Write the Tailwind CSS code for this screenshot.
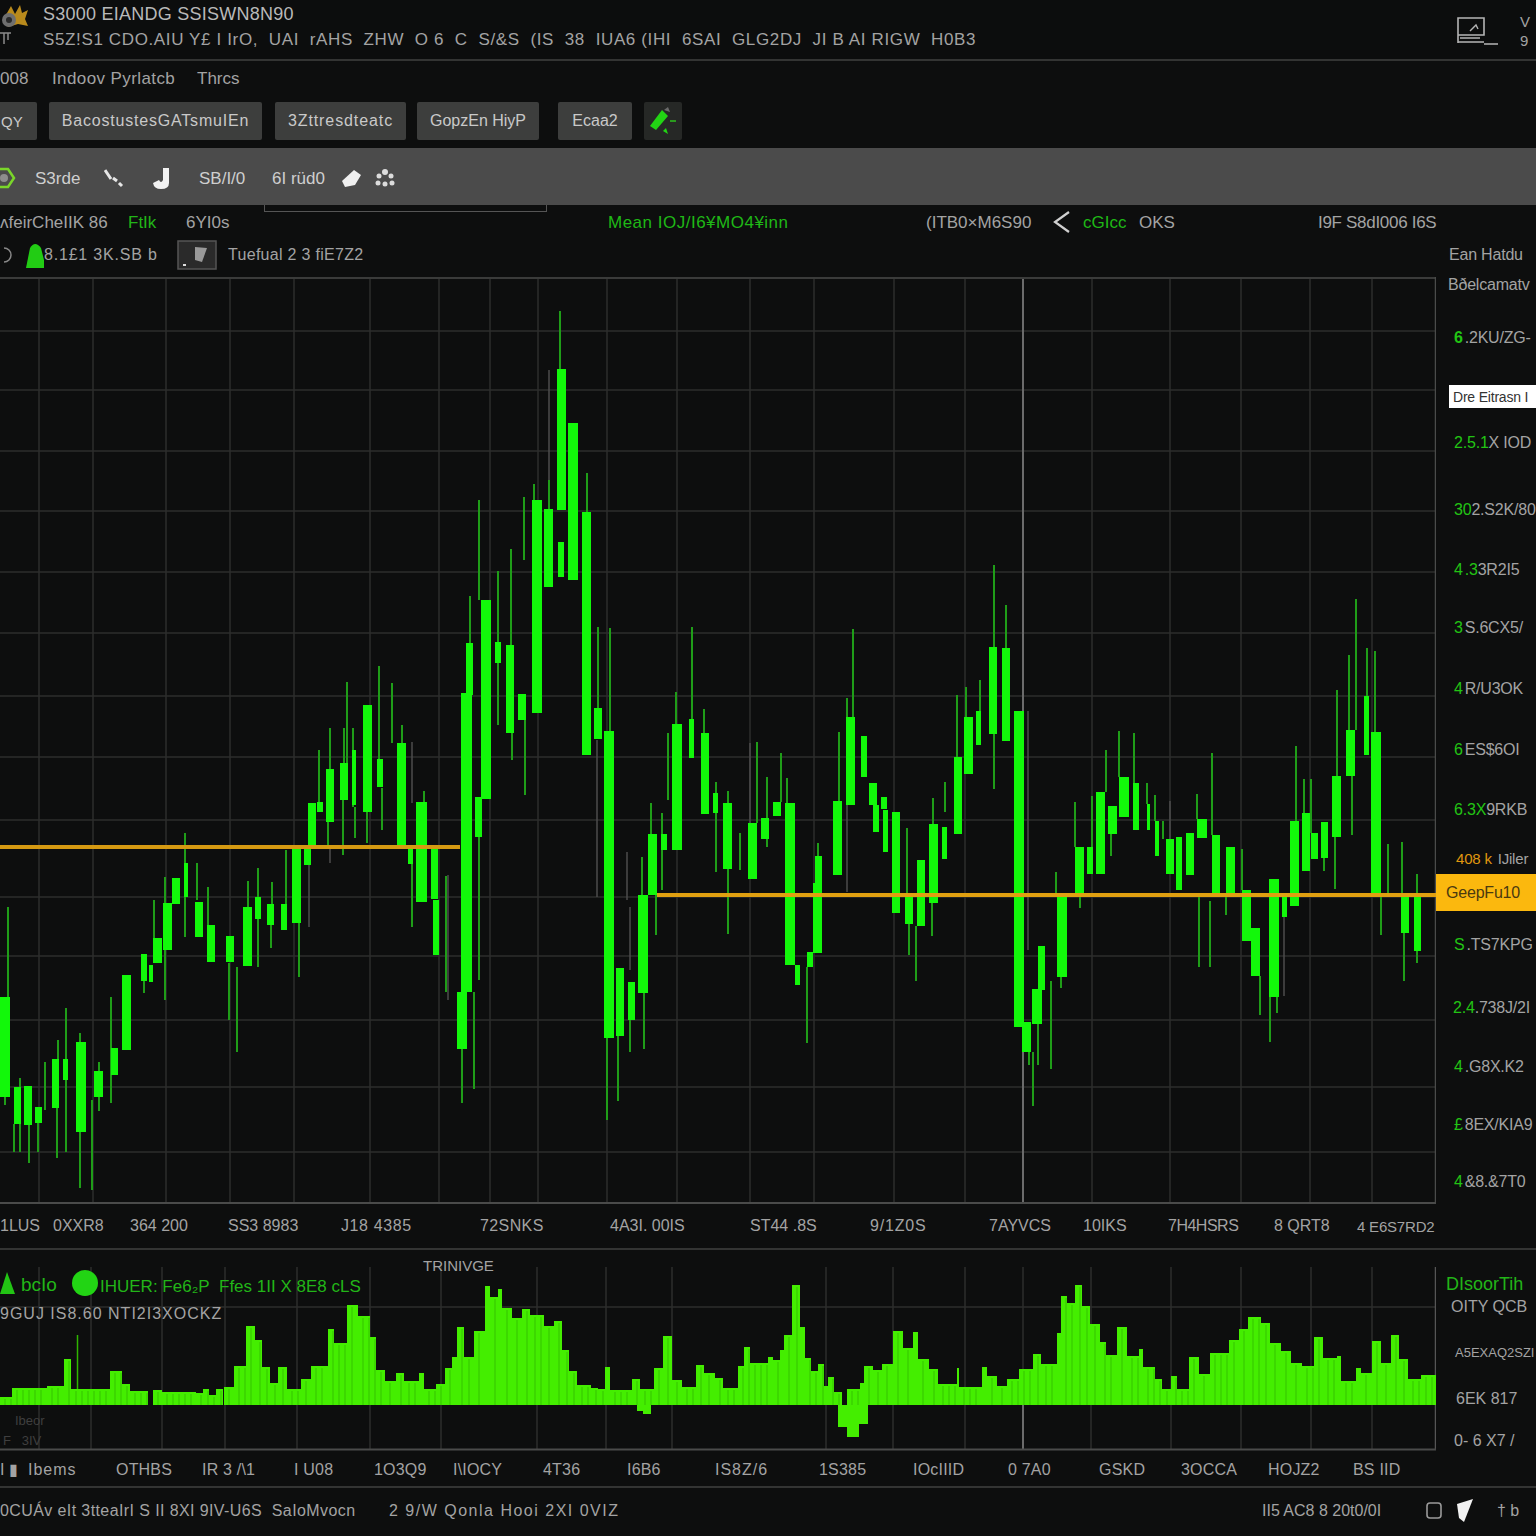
<!DOCTYPE html>
<html lang="en">
<head>
  <meta charset="UTF-8" />
  <title>Trading terminal</title>
  <script src="https://cdn.jsdelivr.net/npm/@tailwindcss/browser@4"></script>
</head>
<body class="bg-[#0d0e0e] text-[#a3a3a3] [font-family:'Liberation_Sans',sans-serif] text-[16px] leading-none overflow-hidden">
<div class="w-[1536px] h-[1536px] overflow-hidden">

  <!-- Header -->
  <header class="h-[61px] bg-[#0c0d0d] border-b-2 border-[#333433] flex">
    <svg class="w-[43px] h-[59px] shrink-0" viewBox="0 0 43 59">
      <path d="M3 20 L11 6 L15 14 L20 5 L22 13 L28 10 L25 19 L28 26 L18 24 L8 27 Z" fill="#b98a1c"/>
      <circle cx="9" cy="20" r="7" fill="#6f6f6f"/>
      <circle cx="9" cy="20" r="3" fill="#2a2a2a"/>
      <path d="M0 33 H11 M4 33 V44 M8 33 V40" stroke="#8a8a8a" stroke-width="1.5" fill="none"/>
    </svg>
    <div class="flex flex-col pt-[5px] gap-[8px] whitespace-nowrap">
      <div class="text-[18px] text-[#b9b9b9] tracking-[0.25px]">S3000 EIANDG SSISWN8N90</div>
      <div class="text-[17px] tracking-[0.63px]">S5Z!S1 CDO.AIU Y£ I IrO,&nbsp; UAI&nbsp; rAHS&nbsp; ZHW&nbsp; O 6&nbsp; C&nbsp; S/&amp;S&nbsp; (IS&nbsp; 38&nbsp; IUA6 (IHI&nbsp; 6SAI&nbsp; GLG2DJ&nbsp; JI B AI RIGW&nbsp; H0B3</div>
    </div>
    <div class="ml-auto flex">
      <svg class="w-[44px] h-[59px]" viewBox="0 0 44 59">
        <path d="M2 18 H28 V35 H2 Z M2 42 H28 M28 44 H42 M2 35 V43" stroke="#b5b5b5" stroke-width="1.6" fill="none"/>
        <path d="M14 31 L20 25 L22 29 M4 38 H24" stroke="#b5b5b5" stroke-width="1.4" fill="none"/>
      </svg>
      <div class="w-[36px] pl-[20px] pt-[14px] flex flex-col gap-[4px] text-[15px]"><span>V</span><span>9</span></div>
    </div>
  </header>

  <!-- Menu -->
  <nav class="h-[39px] flex items-center pb-[4px] text-[17px] whitespace-nowrap">
    <span class="w-[52px]">008</span>
    <span class="w-[145px] tracking-[0.4px]">Indoov Pyrlatcb</span>
    <span>Thrcs</span>
  </nav>

  <!-- Tool buttons -->
  <div class="h-[48px] flex items-start pt-[2px] text-[16px] text-[#c9c9c9] whitespace-nowrap">
    <div class="w-[37px] h-[38px] bg-[#3d3e3d] rounded-r-[2px] flex items-center pl-[1px] text-[15px]">QY</div>
    <div class="ml-[12px] w-[213px] h-[38px] bg-[#3d3e3d] rounded-[2px] flex items-center justify-center tracking-[0.8px]">BacostustesGATsmuIEn</div>
    <div class="ml-[13px] w-[131px] h-[38px] bg-[#3d3e3d] rounded-[2px] flex items-center justify-center tracking-[0.9px]">3Zttresdteatc</div>
    <div class="ml-[11px] w-[122px] h-[38px] bg-[#3d3e3d] rounded-[2px] flex items-center justify-center">GopzEn HiyP</div>
    <div class="ml-[19px] w-[74px] h-[38px] bg-[#3d3e3d] rounded-[2px] flex items-center justify-center">Ecaa2</div>
    <div class="ml-[12px] w-[38px] h-[38px] bg-[#262826] rounded-[2px]">
      <svg class="w-[38px] h-[38px]" viewBox="0 0 38 38">
        <path d="M6 24 L18 8 L24 14 L12 28 Z" fill="#22d414"/>
        <path d="M20 8 L24 5 L26 10 Z" fill="#6b6b6b"/>
        <path d="M19 29 L22 26 L24 32 Z" fill="#22d414"/>
        <path d="M26 19 H32" stroke="#2a9a1e" stroke-width="2"/>
      </svg>
    </div>
  </div>

  <!-- Gray toolbar -->
  <div class="h-[57px] bg-[#4b4b4b] flex items-center pt-[4px] text-[17px] text-[#cfcfcf] whitespace-nowrap">
    <svg class="w-[35px] h-[40px] shrink-0" viewBox="0 0 35 40">
      <path d="M0 10 L8 10 L14 19 L8 28 L0 28" fill="none" stroke="#7ad62a" stroke-width="2.5"/>
      <circle cx="4" cy="19" r="4" fill="#8d8d8d"/>
    </svg>
    <span class="w-[69px]">S3rde</span>
    <svg class="w-[49px] h-[30px] shrink-0" viewBox="0 0 49 30">
      <path d="M1 6 L7 15 M9 14 L13 17 M15 19 L18 22" stroke="#e6e6e6" stroke-width="3"/>
    </svg>
    <svg class="w-[46px] h-[30px] shrink-0" viewBox="0 0 46 30">
      <path d="M16 4 V19 Q16 25 8 25 Q1 25 0 19 L6 16 Q8 20 10 16 V4 Z" fill="#f2f2f2"/>
    </svg>
    <span class="w-[73px]">SB/I/0</span>
    <span class="w-[70px]">6I rüd0</span>
    <svg class="w-[32px] h-[30px] shrink-0" viewBox="0 0 32 30">
      <path d="M0 17 L12 6 L19 11 L13 21 L3 23 Z" fill="#f0f0f0"/>
    </svg>
    <svg class="w-[24px] h-[30px] shrink-0" viewBox="0 0 24 30">
      <g fill="#dcdcdc"><circle cx="11" cy="8" r="3"/><circle cx="5" cy="12" r="2.5"/><circle cx="17" cy="12" r="2.5"/><circle cx="4" cy="19" r="2.5"/><circle cx="11" cy="20" r="2.5"/><circle cx="18" cy="19" r="2.5"/></g>
    </svg>
  </div>

  <!-- Main chart and price axis -->
  <section class="h-[1045px] flex border-b-2 border-[#333433]">
    <div class="w-[1436px] shrink-0 flex flex-col relative">
      <div class="absolute left-[264px] top-0 w-[283px] h-[7px] border-x border-b border-[#555]"></div>
      <div class="h-[35px] shrink-0 flex items-center text-[17px] whitespace-nowrap [&>*]:shrink-0">
        <span class="w-[128px]">ʌfeirCheIIK 86</span>
        <span class="w-[58px] text-[#22b518]">FtIk</span>
        <span class="w-[422px]">6YI0s</span>
        <span class="w-[318px] text-[#1fb816] tracking-[0.5px]">Mean IOJ/I6¥MO4¥inn</span>
        <span class="w-[126px]">(ITB0×M6S90</span>
        <svg class="w-[31px] h-[30px]" viewBox="0 0 31 30"><path d="M17 4 L3 14 L17 24" fill="none" stroke="#d0d0d0" stroke-width="2.2"/></svg>
        <span class="w-[56px] text-[#1fb816]">cGIcc</span>
        <span class="w-[179px]">OKS</span>
        <span class="tracking-[-0.3px]">I9F S8dI006 I6S</span>
      </div>
      <div class="h-[37px] shrink-0 flex items-center pb-[8px] text-[16px] whitespace-nowrap [&>*]:shrink-0">
        <svg class="w-[44px] h-[30px]" viewBox="0 0 44 30">
          <path d="M0 8 A7 7 0 0 1 0 22" transform="translate(4 0)" fill="none" stroke="#888" stroke-width="1.5"/>
          <path d="M26 28 L30 8 Q35 0 41 8 L46 28 Z" fill="#22cc14"/>
        </svg>
        <span class="w-[133px] tracking-[0.8px]">8.1£1 3K.SB b</span>
        <svg class="w-[40px] h-[30px]" viewBox="0 0 40 30">
          <rect x="1" y="1" width="38" height="28" fill="#2a2a2a" stroke="#555" stroke-width="1.5"/>
          <path d="M18 7 V20 L25 22 L30 8" fill="#999"/>
          <path d="M6 25 H9" stroke="#ddd" stroke-width="2"/>
        </svg>
        <span class="ml-[11px] tracking-[0.3px]">Tuefual 2 3 fiE7Z2</span>
      </div>
      <svg id="main" class="w-[1436px] h-[927px] block shrink-0" viewBox="0 277 1436 927"></svg>
      <div class="h-[44px] shrink-0 flex items-center text-[16px] whitespace-nowrap [&>*]:shrink-0">
        <span class="w-[53px]">1LUS</span><span class="w-[77px]">0XXR8</span><span class="w-[98px]">364 200</span><span class="w-[113px]">SS3 8983</span><span class="w-[139px] tracking-[0.6px]">J18 4385</span><span class="w-[130px] tracking-[0.4px]">72SNKS</span><span class="w-[140px]">4A3I. 00IS</span><span class="w-[120px]">ST44 .8S</span><span class="w-[119px] tracking-[0.8px]">9/1Z0S</span><span class="w-[94px]">7AYVCS</span><span class="w-[85px]">10IKS</span><span class="w-[106px] tracking-[-0.5px]">7H4HSRS</span><span class="w-[83px]">8 QRT8</span><span class="text-[15px] tracking-[-0.2px]">4 E6S7RD2</span>
      </div>
    </div>
    <div class="flex-1 min-w-0 flex flex-col pt-[35px] text-[16px] tracking-[-0.2px] whitespace-nowrap overflow-hidden">
      <div class="h-[30px] shrink-0 flex items-center pl-[13px]">Ean Hatdu</div>
      <div class="h-[30px] shrink-0 flex items-center pl-[12px]">Bðelcamatv</div>
      <div class="h-[76px] shrink-0 flex items-center pl-[18px]"><b class="text-[#22c414] mr-[2px]">6</b>.2KU/ZG-</div>
      <div class="ml-[13px] mt-[9px] h-[23px] shrink-0 bg-white text-[#333] text-[14px] flex items-center pl-[4px]">Dre Eitrasn I</div>
      <div class="h-[70px] shrink-0 flex items-center pl-[18px]"><span class="text-[#22c414]">2.5.1</span>X IOD</div>
      <div class="h-[64px] shrink-0 flex items-center pl-[18px]"><span class="text-[#22c414]">30</span>2.S2K/80</div>
      <div class="h-[56px] shrink-0 flex items-center pl-[18px]"><span class="text-[#22c414] mr-[2px]">4</span><span class="text-[#22c414]">.3</span>3R2I5</div>
      <div class="h-[60px] shrink-0 flex items-center pl-[18px]"><span class="text-[#22c414] mr-[2px]">3</span>S.6CX5/</div>
      <div class="h-[62px] shrink-0 flex items-center pl-[18px]"><span class="text-[#22c414] mr-[2px]">4</span>R/U3OK</div>
      <div class="h-[60px] shrink-0 flex items-center pl-[18px]"><span class="text-[#22c414] mr-[2px]">6</span>ES$6OI</div>
      <div class="h-[60px] shrink-0 flex items-center pl-[18px]"><span class="text-[#22c414]">6.3X</span>9RKB</div>
      <div class="h-[34px] shrink-0 flex items-center pl-[20px] pt-[2px] text-[15px]"><span class="text-[#e0980e] mr-[6px]">408 k</span>IJiler</div>
      <div class="h-[37px] shrink-0 bg-[#fbb80e] text-[#4a3a10] flex items-center pl-[10px]">GeepFu10</div>
      <div class="h-[68px] shrink-0 flex items-center pl-[18px]"><span class="text-[#22c414] mr-[2px]">S</span>.TS7KPG</div>
      <div class="h-[58px] shrink-0 flex items-center pl-[17px]"><span class="text-[#22c414]">2.4</span>.738J/2I</div>
      <div class="h-[60px] shrink-0 flex items-center pl-[18px]"><span class="text-[#22c414] mr-[2px]">4</span>.G8X.K2</div>
      <div class="h-[56px] shrink-0 flex items-center pl-[18px]"><span class="text-[#22c414] mr-[2px]">£</span>8EX/KIA9</div>
      <div class="h-[58px] shrink-0 flex items-center pl-[18px]"><span class="text-[#22c414] mr-[2px]">4</span>&amp;8.&amp;7T0</div>
    </div>
  </section>

  <!-- Volume panel -->
  <section class="h-[201px] flex">
    <div class="w-[1436px] shrink-0 relative">
      <svg id="vol" class="w-[1436px] h-[201px] block" viewBox="0 1250 1436 201"></svg>
      <div class="absolute left-0 top-[20px] flex items-center text-[#22b518] text-[17px] whitespace-nowrap [&>*]:shrink-0">
        <svg class="w-[21px] h-[26px]" viewBox="0 0 21 26"><path d="M0 24 L7 2 L15 24 Z" fill="#22c414"/></svg>
        <span class="w-[51px] pt-[3px] text-[19px]">bcIo</span>
        <span class="w-[26px] h-[26px] rounded-full bg-[#22d414]"></span>
        <span class="ml-[2px] pt-[6px]">IHUER: Fe6₂P&nbsp; Ffes 1II X 8E8 cLS</span>
      </div>
      <div class="absolute left-0 top-[56px] text-[16px] tracking-[1px] whitespace-nowrap">9GUJ IS8.60 NTI2I3XOCKZ</div>
      <div class="absolute left-[423px] top-[8px] text-[15px] whitespace-nowrap">TRINIVGE</div>
      <div class="absolute left-[15px] top-[164px] text-[13px] text-[#3f3f3f]">Ibeor</div>
      <div class="absolute left-[3px] top-[184px] text-[13px] text-[#3f3f3f] whitespace-pre">F   3IV</div>
    </div>
    <div class="flex-1 min-w-0 flex flex-col whitespace-nowrap overflow-hidden text-[16px]">
      <div class="h-[43px] shrink-0 flex items-end pl-[10px] text-[#22b518] text-[18px]">DIsoorTih</div>
      <div class="h-[22px] shrink-0 flex items-end pl-[15px]">OITY QCB</div>
      <div class="h-[74px] shrink-0 flex items-center pl-[19px] text-[13px]">A5EXAQ2SZI</div>
      <div class="h-[20px] shrink-0 flex items-center pl-[20px]">6EK 817</div>
      <div class="h-[42px] shrink-0 flex items-end pb-[2px] pl-[18px]">0- 6 X7 /</div>
    </div>
  </section>

  <!-- Volume time axis -->
  <div class="h-[37px] border-b-2 border-[#333433] flex items-center pt-[2px] text-[16px] tracking-[0.2px] whitespace-nowrap [&>*]:shrink-0">
    <span class="w-[28px] whitespace-pre">I ▮</span><span class="w-[88px] tracking-[1px]">Ibems</span><span class="w-[86px]">OTHBS</span><span class="w-[92px]">IR 3 /\1</span><span class="w-[80px]">I U08</span><span class="w-[79px]">1O3Q9</span><span class="w-[90px]">I\IOCY</span><span class="w-[84px]">4T36</span><span class="w-[88px]">I6B6</span><span class="w-[104px] tracking-[1px]">IS8Z/6</span><span class="w-[94px]">1S385</span><span class="w-[95px]">IOcIIID</span><span class="w-[91px]">0 7A0</span><span class="w-[82px]">GSKD</span><span class="w-[87px]">3OCCA</span><span class="w-[85px]">HOJZ2</span><span>BS IID</span>
  </div>

  <!-- Footer -->
  <footer class="h-[48px] flex items-center text-[16px] whitespace-nowrap pb-[3px] [&>*]:shrink-0">
    <span class="w-[389px] tracking-[0.4px]">0CUÁv eIt 3tteaIrI S II 8XI 9IV-U6S&nbsp; SaIoMvocn</span>
    <span class="w-[873px] tracking-[1.5px]">2 9/W Qonla Hooi 2XI 0VIZ</span>
    <span class="w-[164px]">II5 AC8 8 20t0/0I</span>
    <svg class="w-[30px] h-[24px]" viewBox="0 0 30 24"><rect x="1" y="4" width="14" height="15" rx="3" fill="none" stroke="#9a9a9a" stroke-width="1.6"/></svg>
    <svg class="w-[41px] h-[24px]" viewBox="0 0 41 24"><path d="M1 5 L17 0 L8 23 L3 19 Z" fill="#f2f2f2"/></svg>
    <span class="whitespace-pre">† b</span>
  </footer>
</div>

<script>
  // [left, right, top, bottom]
  var bodies = [
    [0,10,997,1097],[14,21,1087,1124],[24,32,1086,1125],[35,42,1107,1123],[52,59,1059,1108],[63,68,1059,1080],
    [76,86,1042,1132],[94,103,1071,1097],[111,118,1048,1075],[122,131,975,1050],[141,147,954,981],[149,153,965,982],
    [153,162,938,963],[163,172,903,950],[172,180,878,904],[184,188,863,897],[195,203,902,937],[207,215,925,962],
    [226,234,936,962],[243,252,907,966],[255,261,897,919],[267,274,904,925],[281,287,904,930],[292,301,849,923],
    [304,311,847,865],[308,316,803,847],[317,323,802,812],[326,334,769,822],[340,348,763,800],[352,356,750,805],
    [363,372,705,812],[377,383,759,787],[397,406,743,845],[408,413,848,864],[416,427,802,902],[431,438,848,899],
    [433,439,900,955],[461,472,693,992],[457,467,992,1049],[466,473,643,695],[475,482,797,837],[481,491,600,799],
    [495,501,642,663],[506,514,645,733],[518,526,694,720],[532,542,500,713],[544,553,509,587],[557,566,369,510],
    [558,564,542,577],[568,578,423,580],[582,591,512,755],[594,602,708,739],[604,614,731,1038],[616,624,968,1036],
    [628,635,982,1020],[638,648,895,993],[648,657,834,895],[661,667,834,850],[672,682,724,850],[689,694,719,758],
    [701,709,733,814],[713,718,793,813],[723,732,803,869],[748,757,823,879],[761,769,818,839],[773,781,802,816],
    [785,795,803,965],[795,800,965,985],[807,813,952,967],[813,822,883,953],[815,822,856,883],[833,842,801,875],
    [846,855,717,805],[861,867,736,777],[869,877,783,805],[873,879,805,832],[881,887,797,809],[883,888,810,852],
    [892,900,812,913],[905,913,897,924],[917,925,860,926],[929,938,824,903],[942,947,827,859],[954,962,757,834],
    [964,973,717,774],[976,981,711,745],[989,997,647,734],[1002,1010,648,741],[1014,1024,711,1027],[1022,1031,1022,1052],
    [1032,1042,989,1024],[1038,1045,946,990],[1057,1067,897,977],[1075,1084,847,894],[1087,1093,847,874],[1096,1105,792,874],
    [1108,1117,806,834],[1119,1129,777,817],[1133,1139,783,830],[1147,1150,804,830],[1155,1159,821,856],[1166,1174,839,874],
    [1176,1182,837,890],[1186,1194,833,875],[1197,1207,819,838],[1212,1220,835,896],[1226,1235,847,894],[1242,1251,890,941],
    [1251,1260,928,976],[1269,1279,879,997],[1282,1287,896,917],[1290,1299,821,906],[1302,1310,813,871],[1311,1318,833,859],
    [1321,1328,822,858],[1332,1341,776,837],[1346,1355,730,776],[1364,1369,696,755],[1371,1381,732,894],[1401,1409,896,933],[1414,1421,897,951]
  ];
  // [x, top, bottom]
  var wicks = [
    [8,907,1000],[5,1097,1105],[14,1124,1152],[20,1078,1152],[29,1125,1163],[38,1120,1152],[45,1062,1110],[57,1108,1158],[58,1040,1059],
    [66,1008,1152],[80,1033,1042],[80,1132,1188],[92,1100,1190],[99,1062,1111],[111,997,1103],[144,980,993],[154,900,938],[165,877,903],
    [165,950,1000],[185,833,863],[185,897,937],[197,863,900],[208,887,925],[229,963,1020],[237,967,1052],[248,881,907],[258,868,897],
    [258,919,967],[272,882,904],[271,925,948],[286,850,904],[299,923,977],[347,682,763],[379,666,760],[392,683,743],[330,728,770],
    [319,750,802],[344,728,763],[353,728,807],[355,807,838],[367,812,843],[382,788,830],[343,800,855],[328,822,845],[402,725,743],
    [412,864,927],[424,791,802],[446,876,992],[462,1049,1103],[474,992,1089],[479,837,980],[479,500,600],[498,571,725],[511,549,645],
    [470,596,643],[524,497,560],[534,484,500],[549,480,509],[560,311,369],[587,473,512],[512,733,760],[525,720,795],[598,627,708],
    [610,628,731],[618,1036,1101],[630,1020,1052],[644,993,1049],[607,1038,1120],[642,857,895],[651,803,834],[656,895,935],[662,813,890],
    [668,733,800],[676,692,724],[692,627,719],[704,709,733],[716,782,872],[728,791,803],[728,869,934],[757,742,823],[767,777,847],
    [781,753,802],[787,778,803],[807,967,1043],[818,843,857],[853,629,717],[839,732,801],[847,698,717],[909,924,955],[916,926,981],
    [932,903,936],[907,828,897],[933,798,824],[945,782,812],[957,695,757],[966,687,717],[980,680,711],[994,565,647],[994,734,789],
    [1006,605,648],[1038,1024,1065],[1033,1052,1106],[1051,981,1069],[1029,1052,1065],[1056,872,897],[1061,977,988],[1075,802,847],
    [1080,894,908],[1092,796,847],[1106,750,792],[1119,731,777],[1134,733,783],[1147,783,804],[1111,834,856],[1155,795,821],[1163,821,839],
    [1197,794,819],[1212,753,835],[1199,897,967],[1210,901,967],[1226,894,915],[1242,849,890],[1260,976,1015],[1270,997,1042],[1277,997,1013],
    [1296,746,821],[1304,779,813],[1311,779,833],[1324,858,871],[1335,837,889],[1337,690,776],[1349,655,730],[1356,599,730],[1367,648,696],
    [1375,651,732],[1381,894,935],[1388,844,894],[1402,842,896],[1404,933,981],[1417,874,897],[1417,951,963],[740,833,870],[1352,776,835]
  ];
  var grayWicks = [
    [549,370,480],[448,875,1000],[597,740,897],[627,852,900],[630,907,970],[412,742,803],[309,865,927],[750,743,823],[847,805,892],
    [1028,711,950],[1170,801,850],[1284,917,996],[330,848,863],[343,848,855]
  ];
  var volBars = [
    [0,12,1397],[12,47,1388],[47,64,1386],[64,71,1359],[71,110,1389],[110,122,1371],[122,130,1384],[130,148,1391],[153,162,1390],[162,196,1392],
    [196,203,1393],[203,209,1389],[209,216,1395],[216,223,1389],[224,234,1387],[234,246,1366],[246,255,1326],[255,262,1340],[262,270,1367],
    [270,278,1383],[278,287,1367],[287,301,1389],[301,311,1379],[311,328,1366],[328,334,1329],[334,347,1343],[347,358,1305],[358,370,1316],
    [370,376,1337],[376,385,1370],[385,396,1381],[396,404,1373],[404,419,1381],[419,424,1373],[424,436,1389],[436,445,1384],[445,452,1368],
    [452,457,1357],[457,464,1327],[464,474,1357],[474,485,1331],[485,490,1286],[490,498,1297],[498,502,1289],[502,512,1308],[512,522,1318],
    [522,530,1309],[530,544,1315],[544,554,1326],[554,562,1321],[562,569,1350],[569,577,1371],[577,591,1385],[591,598,1388],[598,605,1389],
    [605,610,1367],[610,632,1390],[632,640,1379],[640,654,1389],[654,663,1368],[663,672,1336],[672,682,1380],[682,696,1387],[696,704,1365],
    [704,715,1373],[715,723,1378],[723,738,1388],[738,744,1366],[744,750,1347],[750,768,1363],[768,773,1357],[773,780,1360],[780,784,1350],
    [784,792,1335],[792,800,1285],[800,805,1327],[805,811,1358],[811,818,1371],[818,824,1364],[824,828,1386],[828,834,1377],[834,842,1392],
    [847,860,1389],[860,864,1383],[864,873,1366],[873,882,1370],[882,893,1364],[893,903,1331],[903,913,1348],[913,918,1332],[918,929,1359],
    [929,938,1369],[938,957,1384],[957,959,1368],[959,982,1387],[982,987,1367],[987,997,1376],[997,1007,1386],[1007,1019,1379],[1019,1033,1369],
    [1033,1041,1354],[1041,1057,1364],[1057,1061,1333],[1061,1067,1296],[1067,1075,1303],[1075,1082,1285],[1082,1090,1306],[1090,1100,1324],
    [1100,1106,1342],[1106,1117,1355],[1117,1127,1327],[1127,1139,1356],[1139,1143,1349],[1143,1155,1367],[1155,1162,1379],[1162,1171,1389],
    [1171,1177,1376],[1177,1189,1389],[1189,1199,1357],[1199,1210,1374],[1210,1229,1353],[1229,1239,1340],[1239,1248,1329],[1248,1261,1317],
    [1261,1270,1323],[1270,1281,1343],[1281,1291,1351],[1291,1302,1363],[1302,1314,1366],[1314,1323,1337],[1323,1337,1358],[1337,1341,1356],
    [1341,1356,1381],[1356,1361,1368],[1361,1372,1373],[1372,1381,1341],[1381,1391,1363],[1391,1399,1335],[1399,1408,1359],[1408,1421,1379],[1421,1436,1375]
  ];
  var volDown = [[838,847,1427],[847,859,1437],[859,868,1424],[637,643,1411],[643,651,1414]];

  function line(x1, y1, x2, y2, color, w) {
    return '<line x1="' + x1 + '" y1="' + y1 + '" x2="' + x2 + '" y2="' + y2 + '" stroke="' + color + '" stroke-width="' + w + '"/>';
  }
  function rect(x, y, w, h, color) {
    return '<rect x="' + x + '" y="' + y + '" width="' + w + '" height="' + h + '" fill="' + color + '"/>';
  }

  // main chart
  var grid = '#2d2e2d', svg = '';
  [39,93,166,230,294,370,439,490,538,607,677,750,814,894,965,1092,1170,1241,1310,1372].forEach(function (x) {
    svg += line(x, 277, x, 1203, grid, 1.5);
  });
  [331,390,451,511,572,633,696,757,820,897,956,1020,1087,1152].forEach(function (y) {
    svg += line(0, y, 1436, y, grid, 1.5);
  });
  svg += line(1023, 277, 1023, 1203, '#6b6b6b', 2);
  svg += line(0, 278, 1436, 278, '#3a3b3a', 2);
  svg += line(0, 1203, 1436, 1203, '#4a4b4a', 2);
  svg += line(1435.5, 277, 1435.5, 1203, '#4a4b4a', 1.5);
  grayWicks.forEach(function (w) { svg += line(w[0], w[1], w[0], w[2], '#4c4c4c', 1.5); });
  wicks.forEach(function (w) { svg += line(w[0], w[1], w[0], w[2], '#1f9d18', 2); });
  bodies.forEach(function (b) { svg += rect(b[0], b[2], b[1] - b[0], b[3] - b[2], '#12f80a'); });
  svg += rect(0, 845, 460, 4, '#d59a12');
  svg += rect(657, 893, 779, 4, '#e0a010');
  document.getElementById('main').innerHTML = svg;

  // volume panel
  var v = '';
  [39,91,162,225,297,370,441,537,606,672,826,893,965,1091,1171,1241,1311,1372].forEach(function (x) {
    v += line(x, 1267, x, 1449, '#2d2e2d', 1.5);
  });
  v += line(0, 1307, 1436, 1307, '#2d2e2d', 1.5);
  v += line(1023, 1267, 1023, 1405, '#2d2e2d', 1.5);
  v += line(1023, 1405, 1023, 1449, '#6b6b6b', 2);
  v += line(1435.5, 1267, 1435.5, 1449, '#555', 1.5);
  v += line(0, 1449.5, 1436, 1449.5, '#4a4b4a', 2);
  volBars.forEach(function (b) { v += rect(b[0], b[2], b[1] - b[0], 1405 - b[2], '#44ee00'); });
  volDown.forEach(function (b) { v += rect(b[0], 1405, b[1] - b[0], b[2] - 1405, '#44ee00'); });
  v += line(77.5, 1335, 77.5, 1389, '#2fb500', 1.5);
  // fine striations inside the bars
  volBars.forEach(function (b) {
    for (var x = b[0] + 5; x < b[1]; x += 6) v += line(x, b[2] + 2, x, 1405, '#35c400', 1);
  });
  document.getElementById('vol').innerHTML = v;
</script>
</body>
</html>
